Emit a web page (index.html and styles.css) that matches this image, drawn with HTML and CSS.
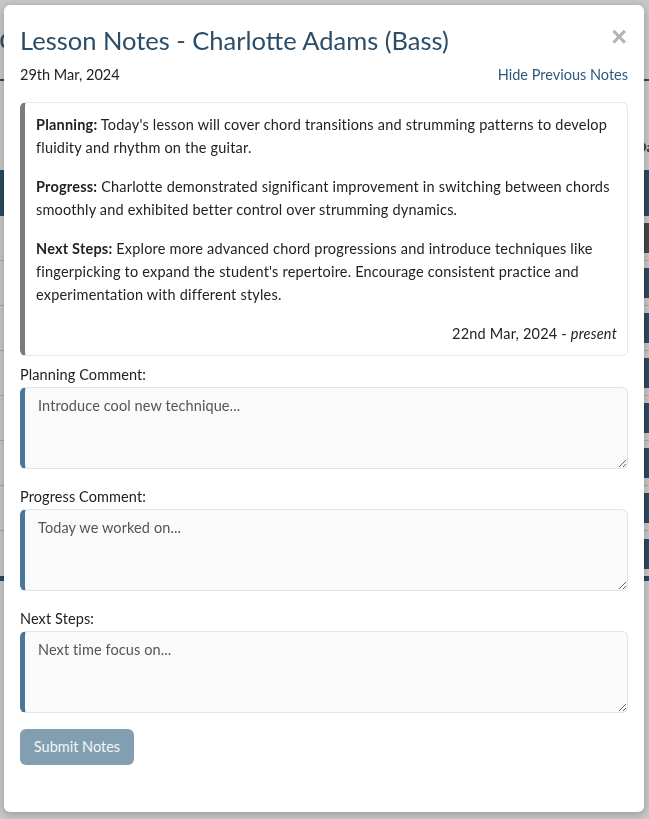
FILE: index.html
```html
<!DOCTYPE html>
<html lang="en">
<head>
<meta charset="utf-8">
<title>Lesson Notes</title>
<link rel="stylesheet" href="styles.css">
</head>
<body>
<div class="page">
  <header class="page-header">
    <h1 class="page-title">Student Board</h1>
  </header>
  <div class="table-caption">Da</div>
  <div class="table">
    <div class="table-head"></div>
    <div class="row row-dark"><span class="cell-btn cell-btn-dark"></span></div>
    <div class="row"><span class="cell-btn"></span></div>
    <div class="row"><span class="cell-btn"></span></div>
    <div class="row"><span class="cell-btn"></span></div>
    <div class="row"><span class="cell-btn"></span></div>
    <div class="row"><span class="cell-btn"></span></div>
    <div class="row"><span class="cell-btn"></span></div>
    <div class="row"><span class="cell-btn"></span></div>
  </div>
</div>

<div class="modal-layer">
  <div class="modal">
    <div class="modal-header">
      <h2 class="modal-title">Lesson Notes - Charlotte Adams (Bass)</h2>
      <button class="close" type="button" aria-label="Close">&times;</button>
    </div>
    <div class="meta">
      <span class="date">29th Mar, 2024</span>
      <a class="toggle" href="#">Hide Previous Notes</a>
    </div>

    <div class="note-card">
      <p><strong>Planning:</strong> Today's lesson will cover chord transitions and strumming patterns to develop fluidity and rhythm on the guitar.</p>
      <p><strong>Progress:</strong> Charlotte demonstrated significant improvement in switching between chords smoothly and exhibited better control over strumming dynamics.</p>
      <p><strong>Next Steps:</strong> Explore more advanced chord progressions and introduce techniques like fingerpicking to expand the student's repertoire. Encourage consistent practice and experimentation with different styles.</p>
      <p class="note-range">22nd Mar, 2024 - <em>present</em></p>
    </div>

    <form class="notes-form">
      <label class="field-label" for="planning">Planning Comment:</label>
      <textarea id="planning" class="field" placeholder="Introduce cool new technique..."></textarea>

      <label class="field-label" for="progress">Progress Comment:</label>
      <textarea id="progress" class="field" placeholder="Today we worked on..."></textarea>

      <label class="field-label" for="next">Next Steps:</label>
      <textarea id="next" class="field" placeholder="Next time focus on..."></textarea>

      <button class="submit" type="button">Submit Notes</button>
    </form>
  </div>
</div>
</body>
</html>
```

FILE: styles.css
```css
* { box-sizing: border-box; }

html, body {
  margin: 0;
  padding: 0;
}

body {
  background: #c8c8c8;
  font-family: "Lato", "Noto Sans", sans-serif;
  color: #222;
  overflow: hidden;
}

/* ---------- background page (dimmed) ---------- */
.page {
  width: 649px;
  overflow: hidden;
}

.page-header {
  height: 81px;
  border-bottom: 2px solid #2b4a61;
  padding-top: 22px;
}

.page-title {
  margin: 0;
  font-size: 26px;
  font-weight: 400;
  color: #2b4a61;
  margin-left: -150px;
}

.table-caption {
  height: 89px;
  padding-top: 57px;
  padding-left: 636px;
  font-size: 14px;
  font-weight: 700;
  color: #333;
  white-space: nowrap;
}

.table {
  border-bottom: 5px solid #2b4a61;
}

.table-head {
  height: 46px;
  background: #2b4a61;
}

.row {
  height: 45px;
  border-bottom: 1px solid #a8a8a8;
  display: flex;
  justify-content: flex-end;
  align-items: center;
}

.row:last-child { border-bottom: none; }

.cell-btn {
  width: 40px;
  height: 30px;
  background: #2b4a61;
  margin-right: -20px;
}

.cell-btn-dark {
  background: #474747;
  height: 30px;
}

/* ---------- modal ---------- */
.modal-layer {
  position: fixed;
  inset: 0;
  padding: 5px 5px 7px 4px;
}

.modal {
  background: #fff;
  height: 807px;
  width: 640px;
  border-radius: 6px;
  box-shadow: 0 2px 8px rgba(0, 0, 0, 0.25);
  padding: 16px;
}

.modal-header {
  display: flex;
  justify-content: space-between;
  align-items: flex-start;
}

.modal-title {
  margin: 0;
  font-size: 25.5px;
  line-height: 38px;
  font-weight: 400;
  color: #2c4d67;
}

.close {
  border: 0;
  background: none;
  padding: 0;
  margin: 4px 1px 0 0;
  font-family: "Liberation Sans", sans-serif;
  font-size: 27px;
  line-height: 24px;
  font-weight: 700;
  color: #b3b3b3;
  cursor: pointer;
}

.meta {
  display: flex;
  justify-content: space-between;
  align-items: baseline;
  font-size: 14.5px;
  line-height: 22px;
  margin-top: 5px;
}

.date { color: #222; }

.toggle {
  color: #2f5a7c;
  text-decoration: none;
}

.note-card {
  margin-top: 16px;
  border: 1px solid #e2e9f0;
  border-left: 5px solid #7b7b7b;
  border-radius: 6px;
  padding: 10px 10px 10px 11px;
  font-size: 14.5px;
  letter-spacing: 0.2px;
  line-height: 23px;
  color: #222;
}

.note-card p {
  margin: 0 0 16px 0;
}

.note-card p.note-range {
  margin: 0;
  text-align: right;
}

.notes-form {
  display: flex;
  flex-direction: column;
  align-items: flex-start;
  margin-top: 7px;
}

.field-label {
  font-size: 14.5px;
  letter-spacing: 0.1px;
  line-height: 24px;
  color: #222;
}

.field {
  display: block;
  width: 100%;
  height: 82px;
  margin-bottom: 16px;
  background: #fafafa;
  border: 1px solid #dae6f0;
  border-left: 5px solid #4a7799;
  border-radius: 6px;
  padding: 6px 12px 6px 13px;
  font-family: inherit;
  font-size: 14.5px;
  letter-spacing: 0.1px;
  line-height: 23px;
  color: #222;
  resize: vertical;
}

.field::placeholder {
  color: #555;
  opacity: 1;
}

.submit {
  border: 0;
  border-radius: 6px;
  background: #829fb1;
  color: #f2f5f7;
  font-family: inherit;
  font-size: 14.5px;
  line-height: 22px;
  padding: 7px 13px;
  width: 114px;
  height: 36px;
}
```
